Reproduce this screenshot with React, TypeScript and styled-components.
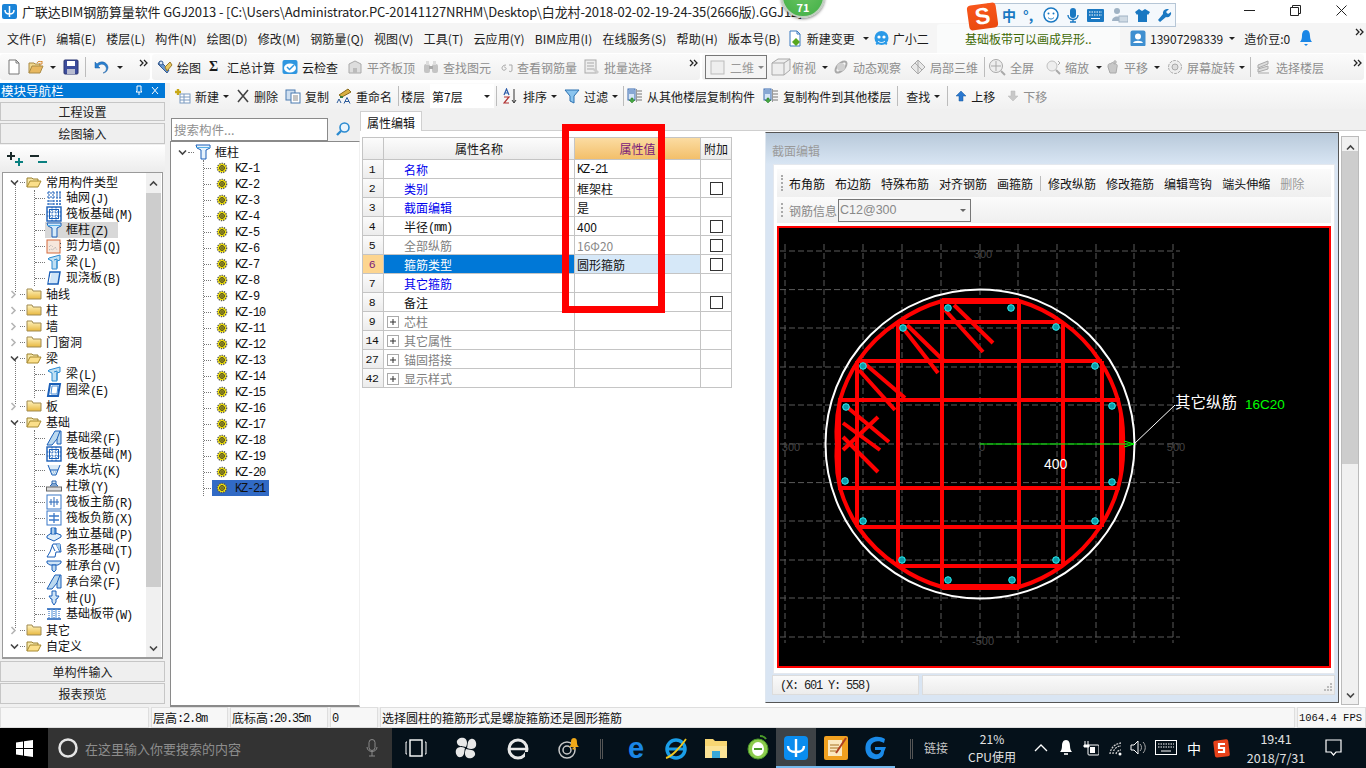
import React from 'react';
import styled, { createGlobalStyle } from 'styled-components';

const Global = createGlobalStyle`
  html, body { margin: 0; padding: 0; overflow: hidden; background: #f0f0f0; }
  * { box-sizing: border-box; }
  body { font-family: "Noto Sans CJK SC", "Liberation Sans", sans-serif; font-size: 12px; color: #111; }
  #root { width: 1366px; height: 768px; }
`;

/* ------- generic small icon helpers ------- */
const Svg: React.FC<{ w?: number; h?: number; vb?: string; children: React.ReactNode }> = ({ w = 16, h = 16, vb, children }) => (
  <svg width={w} height={h} viewBox={vb || `0 0 ${w} ${h}`} style={{ flex: 'none', display: 'block' }}>{children}</svg>
);

const Caret = styled.span<{ $c?: string }>`
  display: inline-block; flex: none; width: 0; height: 0;
  border-left: 3px solid transparent; border-right: 3px solid transparent;
  border-top: 3px solid ${p => p.$c || '#222'};
`;
const Chevrons = () => (
  <Svg w={9} h={8}><path d="M1 1l3 3-3 3M5 1l3 3-3 3" fill="none" stroke="#222" strokeWidth="1.3" /></Svg>
);

/* ------- page frame ------- */
const Page = styled.div`
  width: 1366px; height: 768px; display: flex; flex-direction: column; position: relative; overflow: hidden; background: #f0f0f0;
`;

const TitleBar = styled.div`
  height: 23px; background: #fff; display: flex; align-items: center; padding-left: 2px; gap: 5px; flex: none;
`;
const TitleText = styled.span`
  font-size: 13px; color: #222; white-space: nowrap; letter-spacing: -.12px;
`;
const WinBtns = styled.div`
  position: absolute; right: 2px; top: 0; height: 20px; display: flex;
`;
const WinBtn = styled.div`
  width: 46px; height: 20px; display: flex; align-items: center; justify-content: center;
`;

const Badge = styled.div`
  position: absolute; left: 781px; top: -26px; width: 44px; height: 44px; border-radius: 50%;
  background: radial-gradient(circle at 50% 40%, #6cc563, #3fae45); border: 2px solid #bfcfbf;
  box-shadow: 0 1px 3px rgba(0,0,0,.5); color: #fff; font-size: 11px; line-height: 12px; font-weight: 700;
  display: flex; align-items: flex-end; justify-content: center; padding-bottom: 3px;
`;

const ImeBar = styled.div`
  position: absolute; left: 987px; top: 3px; width: 189px; height: 24px; background: #f4f8fc; border: 1px solid #b6c6d6;
  display: flex; align-items: center; gap: 7px; padding-left: 14px;
`;
const ImeText = styled.span`
  color: #1a78c2; font-weight: 700; font-size: 14px; line-height: 14px;
`;
const ImeComma = styled(ImeText)`
  width: 12px; margin-right: 1px;
`;
const ImeLogo = styled.div`
  position: absolute; left: 968px; top: 4px; width: 29px; height: 25px; transform: rotate(-8deg); border-radius: 4px; z-index: 2;
  background: linear-gradient(#f8561b, #ea4a10); display: flex; align-items: center; justify-content: center;
  color: #fff; font: 700 23px/23px "Liberation Sans", sans-serif;
`;

const MenuBar = styled.div`
  height: 30px; background: #f5f5f5; display: flex; align-items: center; padding-left: 7px; flex: none; position: relative;
`;
const MenuItem = styled.span`
  margin-right: 10px; white-space: nowrap; color: #222; letter-spacing: .12px;
`;
const TipBox = styled.div`
  position: absolute; left: 937px; top: 1px; width: 183px; height: 29px; background: #fafbfb; border-radius: 3px 3px 0 0;
  color: #3f6a06; display: flex; align-items: center; padding-left: 28px;
`;
const MenuRight = styled.div`
  position: absolute; left: 1130px; top: 0; height: 30px; width: 236px; display: flex; align-items: center;
`;

const ToolRow = styled.div`
  height: 30px; flex: none; display: flex; align-items: stretch; background: #fff; padding-bottom: 3px; padding-top: 1px; position: relative;
`;
const Band = styled.div<{ $w: number; $ml?: number }>`
  width: ${p => p.$w}px; flex: none; display: flex; align-items: center; position: relative; margin-left: ${p => p.$ml ?? 0}px;
  background: linear-gradient(#fbfbfb, #f0f0f0); border-radius: 3px;
`;
const Tool = styled.span<{ $off?: boolean; $ml?: number }>`
  display: inline-flex; align-items: center; gap: 4px; white-space: nowrap; flex: none;
  margin-left: ${p => p.$ml ?? 0}px; color: ${p => (p.$off ? '#8e8e8e' : '#1a1a1a')};
`;
const VSep = styled.span<{ $ml?: number; $h?: number }>`
  width: 1px; height: ${p => p.$h ?? 20}px; background: #bcbcbc; flex: none; margin-left: ${p => p.$ml ?? 0}px;
`;
const DlgSep = styled(VSep)`
  margin: 0 -3px;
`;
const BandEnd = styled.span`
  position: absolute; right: 2px; top: 5px;
`;
const SigmaGlyph = styled.b`
  font-family: "Liberation Serif", serif; font-size: 14px; width: 10px;
`;
const ViewCombo = styled.div`
  width: 62px; height: 24px; border: 1px solid #777; margin-left: 3px; display: flex; align-items: center; gap: 4px; padding-left: 4px; color: #999; background: #f4f4f4; flex: none;
`;

const Body = styled.div`
  flex: 1; display: flex; min-height: 0; background: #f0f0f0;
`;

/* ------- left navigation ------- */
const Nav = styled.div`
  width: 165px; flex: none; display: flex; flex-direction: column; background: #f0f0f0;
`;
const NavHead = styled.div`
  height: 15px; flex: none; background: #0078d7; color: #fff; display: flex; align-items: center; justify-content: space-between;
  padding: 0 5px 0 1px; font-size: 12.5px; line-height: 15px;
`;
const NavBtn = styled.div<{ $mt?: number; $h?: number }>`
  height: ${p => p.$h ?? 21}px; flex: none; margin-top: ${p => p.$mt ?? 1}px; margin-right: 0; display: flex; align-items: center; justify-content: center;
  border: 1px solid #c6c6c6; background: #efefef; color: #222;
`;
const ExpandStrip = styled.div`
  height: 27px; flex: none; display: flex; align-items: center; gap: 6px; margin-top: 1px; padding-left: 6px; background: linear-gradient(#fff, #ececec);
`;
const NavTree = styled.div`
  height: 487px; flex: none; margin: 0 2px; border: 1px solid #9a9a9a; border-bottom-width: 2px; background: #fff; overflow: hidden; position: relative; padding-top: 1px;
`;
const ScrollTrack = styled.div`
  position: absolute; right: 1px; top: 0; bottom: 0; width: 15px; background: #f0f0f0; display: flex; flex-direction: column; align-items: center; justify-content: space-between; padding: 7px 0 5px;
`;
const ScrollThumb = styled.div<{ $top: number; $h: number }>`
  position: absolute; left: 0; right: 0; top: ${p => p.$top}px; height: ${p => p.$h}px; background: #cdcdcd;
`;
const RowT = styled.div`
  height: 16px; line-height: 16px; display: flex; align-items: center; white-space: nowrap; position: relative;
`;
const TopRow = styled(RowT)`
  padding-left: 7px;
`;
const ChevCell = styled.span`
  width: 10px; flex: none; display: flex;
`;
const DotStub = styled.span<{ $w?: number }>`
  width: ${p => p.$w ?? 5}px; flex: none; border-bottom: 1px dotted #777; height: 0; margin-right: 1px;
`;
const Children = styled.div`
  margin-left: 31px; border-left: 1px dotted #777; position: relative;
  &::before { content: ''; position: absolute; left: -20px; top: -6px; bottom: -6px; border-left: 1px dotted #777; }
`;
const ChildRow = styled(RowT)`
  gap: 0;
`;
const ChildLabel = styled.span`
  margin-left: 3px; color: #111; padding: 0 1px;
`;
const ActiveWrap = styled.span`
  display: inline-flex; align-items: center; background: #d8d8d8; height: 16px; margin-left: -1px; padding: 0 9px 0 1px;
`;
const Mono = styled.span`
  font-family: "Liberation Mono", monospace; letter-spacing: -1.2px; font-size: 12px; position: relative; top: 1px;
`;
const FpsText = styled(Mono)`
  letter-spacing: 0; font-size: 10.5px; top: 0;
`;
const fmt = (s: string) =>
  s.split(/([\x20-\x7e]+)/).map((p, i) => (/^[\x20-\x7e]+$/.test(p) ? <Mono key={i}>{p}</Mono> : p));

/* ------- main ------- */
const Main = styled.div`
  flex: 1; margin-left: 5px; display: flex; flex-direction: column; min-width: 0;
`;
const CmdBar = styled.div`
  height: 26px; flex: none; display: flex; align-items: center; padding-left: 5px; background: linear-gradient(#fbfbfb, #f1f1f1);
`;
const FloorCombo = styled.div`
  width: 64px; height: 24px; background: #fff; margin-left: 5px; display: flex; align-items: center; justify-content: space-between; padding: 0 4px 0 2px; flex: none;
`;
const Split = styled.div`
  flex: 1; display: flex; min-height: 0;
`;
const TreeCol = styled.div`
  width: 190px; flex: none; padding-top: 8px; display: flex; flex-direction: column; background: #f0f0f0;
`;
const SearchRow = styled.div`
  height: 24px; flex: none; display: flex; align-items: center; padding-left: 1px;
`;
const SearchBox = styled.div`
  width: 157px; height: 23px; border: 1px solid #8a8a8a; background: #fff; color: #909090; display: flex; align-items: center; padding-left: 2px; font-size: 12.5px;
`;
const SearchBtn = styled.div`
  width: 24px; height: 22px; margin-left: 3px; display: flex; align-items: center; justify-content: center;
`;
const KzTree = styled.div`
  flex: 1; background: #fff; border-left: 1px solid #8a8a8a; border-top: 1px solid #8a8a8a; border-bottom: 2px solid #8a8a8a; border-right: 1px solid #f0f0f0; padding-top: 2px; position: relative;
`;
const KzRoot = styled(RowT)`
  padding-left: 7px;
`;
const KzList = styled.div`
  margin-left: 32px; border-left: 1px dotted #777; margin-bottom: 8px;
`;
const KzLabel = styled.span<{ $sel?: boolean }>`
  display: inline-flex; align-items: center; gap: 7px; height: 16px; padding: 0 0 0 4px; width: 57px;
  background: ${p => (p.$sel ? '#316ac5' : 'transparent')};
`;
const EditorCol = styled.div`
  flex: 1; display: flex; flex-direction: column; min-width: 0; position: relative; background: #fff;
`;
const TabStrip = styled.div`
  height: 22px; flex: none; background: #f0f0f0; padding-top: 2px; display: flex; border-bottom: 1px solid #cfcfcf;
`;
const Tab = styled.div`
  width: 62px; height: 21px; background: #fff; border: 1px solid #d0d0d0; border-bottom: none; display: flex; align-items: center; justify-content: center; color: #111;
`;
const EditorBody = styled.div`
  flex: 1; background: #fff; padding: 6px 0 0 2px; position: relative;
`;
const Grid = styled.div`
  width: 370px; border-top: 1px solid #c4c4c4; border-left: 1px solid #c4c4c4;
`;
const GRow = styled.div<{ $h?: number }>`
  display: grid; grid-template-columns: 21px 191px 126px 31px; height: ${p => p.$h ?? 19}px;
`;
const Cell = styled.div`
  border-right: 1px solid #c4c4c4; border-bottom: 1px solid #c4c4c4; display: flex; align-items: center; overflow: hidden; white-space: nowrap;
`;
const IdxCell = styled(Cell)<{ $sel?: boolean }>`
  background: ${p => (p.$sel ? '#fdd58f' : 'linear-gradient(#fbfbfb,#ececec)')}; color: ${p => (p.$sel ? '#7a1a7a' : '#111')};
  justify-content: center; font-family: "Liberation Mono", monospace; font-size: 11.5px; padding-right: 2px; letter-spacing: -.5px;
`;
const HeadCell = styled(Cell)<{ $hot?: boolean }>`
  justify-content: center; background: ${p => (p.$hot ? 'linear-gradient(#fbdca2,#f3bf6a)' : 'linear-gradient(#fcfcfc,#ebebeb)')};
  color: ${p => (p.$hot ? '#7a1a7a' : '#111')};
`;
const NameCell = styled(Cell)<{ $sel?: boolean; $c?: string }>`
  padding: 1px 0 0 20px; background: ${p => (p.$sel ? '#0078d7' : '#fff')}; color: ${p => (p.$sel ? '#fff' : p.$c || '#111')};
`;
const GroupCell = styled(Cell)`
  padding: 1px 0 0 3px; color: #808080; gap: 5px;
`;
const ValueCell = styled(Cell)<{ $sel?: boolean; $off?: boolean }>`
  padding-left: 2px; background: ${p => (p.$sel ? '#d6e8f8' : '#fff')}; color: ${p => (p.$off ? '#888' : '#111')};
`;
const AddCell = styled(Cell)`
  justify-content: center;
`;
const Check = styled.span`
  width: 13px; height: 13px; border: 1px solid #333; background: #fff; display: block;
`;
const PlusBox = styled.span`
  width: 12px; height: 12px; border: 1px solid #aaa; position: relative; flex: none; background: #fff;
  &::before { content: ''; position: absolute; left: 2px; right: 2px; top: 4px; height: 2px; background: #333; transform: scaleY(.5); }
  &::after { content: ''; position: absolute; top: 2px; bottom: 2px; left: 4px; width: 2px; background: #333; transform: scaleX(.5); }
`;
const RedMark = styled.div`
  position: absolute; left: 562px; top: 124px; width: 103px; height: 189px; border: 7px solid #ff0000; pointer-events: none;
`;

/* ------- section dialog ------- */
const Dialog = styled.div`
  position: absolute; left: 765px; top: 132px; width: 574px; height: 571px; border: 1px solid #555; border-left-color: #dfe7f0;
  background: #d9e5f3; display: flex; flex-direction: column;
`;
const DlgTitle = styled.div`
  height: 31px; flex: none; background: linear-gradient(#b8c9da, #d8e5f3); color: #9a9a9a; padding: 10px 0 0 6px; line-height: 16px;
`;
const DlgInner = styled.div`
  height: 510px; margin: 0 3px 0 7px; flex: none; background: #fff; border: 1px solid #e4e8ee; padding: 4px 3px 0 3px; display: flex; flex-direction: column;
`;
const DlgBar = styled.div<{ $h: number }>`
  height: ${p => p.$h}px; flex: none; display: flex; align-items: center; gap: 10px; padding-left: 12px; background: linear-gradient(#fbfbfb, #efefef);
  position: relative;
  &::before { content: ''; position: absolute; left: 4px; top: 6px; bottom: 6px; border-left: 2px dotted #aaa; }
`;
const DlgOff = styled.span`
  color: #999;
`;
const DlgLabel = styled.span`
  color: #888;
`;
const RebarCombo = styled.div`
  width: 133px; height: 23px; margin-left: -9px; border: 1px solid #777; background: #f4f4f4; color: #888; display: flex; align-items: center; justify-content: space-between; padding: 0 4px 0 1px; font-family: "Liberation Sans", sans-serif; font-size: 12.5px;
`;
const CanvasBox = styled.div`
  margin-top: 3px; height: 442px; flex: none; border: 2px solid #ff0000; background: #000; overflow: hidden;
`;
const DlgStatus = styled.div`
  height: 20px; flex: none; display: flex; gap: 3px; margin: 1px 3px 0 6px;
`;
const DlgCell = styled.div<{ $grow?: boolean }>`
  width: ${p => (p.$grow ? 'auto' : '147px')}; flex: ${p => (p.$grow ? 1 : 'none')}; background: linear-gradient(#fafafa,#ececec); border: 1px solid #dcdcdc; display: flex; align-items: center; padding-left: 7px; color: #222;
  position: relative;
`;
const Grip = styled.span`
  position: absolute; right: 1px; bottom: 1px;
`;
const SideScroll = styled.div`
  position: absolute; left: 1341px; top: 136px; width: 18px; height: 569px; border: 1px solid #bbb; background: #f0f0f0; display: flex; flex-direction: column; align-items: center; justify-content: space-between; padding: 7px 0 5px;
`;

/* ------- status + taskbar ------- */
const Status = styled.div`
  height: 21px; flex: none; display: flex; gap: 2px; background: #f0f0f0; padding-left: 0;
`;
const StatusCell = styled.div<{ $w?: number }>`
  width: ${p => (p.$w ? `${p.$w}px` : 'auto')}; flex: ${p => (p.$w ? 'none' : 1)}; border: 1px solid #dedede; background: #f7f7f7; display: flex; align-items: center; padding-left: 1px; color: #111; white-space: nowrap; overflow: hidden;
`;
const Taskbar = styled.div`
  height: 40px; flex: none; background: #05111a; display: flex; align-items: stretch; color: #fff; position: relative;
`;
const StartBtn = styled.div`
  width: 48px; flex: none; background: #000; display: flex; align-items: center; justify-content: center;
`;
const SearchTask = styled.div`
  width: 344px; flex: none; background: #333; display: flex; align-items: center; padding-left: 9px; gap: 6px; color: #8d8d8d; position: relative; font-size: 13px;
`;
const TaskIcon = styled.div<{ $l: number; $active?: boolean; $run?: boolean }>`
  position: absolute; left: ${p => p.$l}px; top: 0; bottom: 0; width: 40px; display: flex; align-items: center; justify-content: center;
  background: ${p => (p.$active ? '#3d4246' : 'transparent')};
  &::after { content: ''; display: ${p => (p.$run ? 'block' : 'none')}; position: absolute; left: 0; right: 0; bottom: 0; height: 2px; background: #76b9ed; }
`;
const EdgeGlyph = styled.span`
  color: #1a86e6; font-family: "Liberation Sans", sans-serif; font-weight: 700; font-size: 29px; line-height: 30px;
`;
const TrayText = styled.div<{ $l: number; $w: number; $fs?: number; $lh?: number; $c?: string }>`
  position: absolute; left: ${p => p.$l}px; width: ${p => p.$w}px; top: 0; bottom: 0; display: flex; flex-direction: column; justify-content: center; align-items: center;
  color: ${p => p.$c || '#e2e2e2'}; line-height: ${p => p.$lh ?? 18}px; font-size: ${p => p.$fs ?? 12}px;
`;
const TrayIcon = styled.div<{ $l: number }>`
  position: absolute; left: ${p => p.$l}px; top: 11px; display: flex;
`;
const TaskSep = styled.div<{ $l: number }>`
  position: absolute; left: ${p => p.$l}px; top: 11px; height: 20px; width: 3px; border-left: 1px solid #555; border-right: 1px solid #555;
`;

/* ------- tree icons ------- */
const FolderOpen = () => (
  <Svg><path d="M1 13V4h5l1 1h5v2" fill="#f7e8a8" stroke="#9a8030" /><path d="M1 13l3-6h11l-3 6z" fill="#fbdf8a" stroke="#a88a30" /></Svg>
);
const FolderClosed = () => (
  <Svg>
    <defs><linearGradient id="fc" x1="0" y1="0" x2="0" y2="1"><stop offset="0" stopColor="#fff4c0" /><stop offset="1" stopColor="#e8b840" /></linearGradient></defs>
    <path d="M1 13V3h5l1 2h8v8z" fill="url(#fc)" stroke="#a08a50" />
  </Svg>
);
const B = '#1b5fb8';
const IGrid = () => (
  <Svg><path d="M1 3h14M1 7h14M1 11h14M1 14h14M3 1v14M7 1v14M11 1v14M14 1v14" stroke={B} strokeDasharray="2 1" fill="none" /></Svg>
);
const IRaft = () => (
  <Svg><rect x="1" y="1" width="14" height="14" fill="none" stroke={B} strokeWidth="1.4" /><rect x="3.500" y="3.500" width="9" height="9" fill="none" stroke={B} /><path d="M6 1v14M10 1v14M1 6h14M1 10h14" stroke={B} strokeDasharray="1.500 1" /></Svg>
);
const IColumn = ({ dk = false }: { dk?: boolean }) => (
  <Svg><path d="M1 1h14v3l-4 2v9H6V6L2 4z" fill={dk ? '#e6f2fc' : '#d6eaf9'} stroke={B} /><path d="M1 3.5h14" stroke="#58b0e8" /></Svg>
);
const IWall = () => (
  <Svg><rect x="1" y="2" width="13" height="13" fill="#f6e7dc" stroke="#d46a3c" /><path d="M3 12l2-1 2 1 2-3 2 3M3 9l2-2 2 2" stroke="#aaa" fill="none" strokeDasharray="1 1" /><path d="M14.5 5v1M14.5 9v1" stroke="#444" /></Svg>
);
const IBeam = () => (
  <Svg><path d="M3 4l11-3v5l-3 1v8H6V7L2 5z" fill="#bfe0f4" stroke="#2c8ad0" /><path d="M8 6l3-1v9" fill="none" stroke="#2c8ad0" /></Svg>
);
const ISlab = () => (
  <Svg><path d="M4 2h10l-2 12H2z" fill="#cfe4f8" stroke={B} strokeWidth="1.5" /><path d="M3 13l2-10" stroke="#fff" /></Svg>
);
const IRing = () => (
  <Svg><path d="M4 2h10l-2 12H2z" fill="#fff" stroke={B} strokeWidth="2" /><path d="M6 4h6l-1 8H5z" fill="#fff" stroke="#4a8ed8" /></Svg>
);
const IFootBeam = () => (
  <Svg><path d="M1 15l5-9 3-5h6v13h-4V9L6 15z" fill="#bcd9ef" stroke={B} /><path d="M11 9l3-8" stroke={B} /></Svg>
);
const IPit = () => (
  <Svg><path d="M2 3l2 5h8l2-5M4 8l2 5h4l2-5" fill="#dcebf6" stroke={B} /><path d="M5 10h6M6 12h4" stroke="#78aad8" strokeDasharray="1 1" /></Svg>
);
const IPier = () => (
  <Svg><path d="M6 3h4v3H6z" fill="#d6e6f2" stroke="#2a66b0" /><path d="M4 8l2-2h4l2 2z" fill="#d6e6f2" stroke="#2a66b0" /><rect x="0.5" y="9" width="15" height="4" fill="#ddd" stroke="#666" /></Svg>
);
const IRaftBar = ({ neg = false }: { neg?: boolean }) => (
  <Svg><rect x="1" y="1" width="14" height="14" fill="#fff" stroke="#3a78c8" />{neg ? <path d="M3 6h10M3 10h10M8 3v10" stroke="#3a78c8" strokeWidth="1.3" /> : <path d="M3 8h10M8 3v10M5 5v6M11 5v6" stroke="#2a68b8" fill="none" />}</Svg>
);
const IIso = () => (
  <Svg><path d="M1 10l6-4 8 3v2l-7 4-7-3z" fill="#e0eef9" stroke={B} /><path d="M5 2h5v6H5z" fill="#5a9ad8" stroke={B} /><path d="M7 2v6" stroke="#fff" /></Svg>
);
const IStrip = () => (
  <Svg><path d="M1 15l3-5 3-8h7l1 8h-5l-1 5z" fill="#fff" stroke={B} /><path d="M6 3l3 6M10 2l4 8" stroke={B} /><path d="M9 3l5-1v7l-4-6z" fill="#a6cdec" /></Svg>
);
const ICap = () => (
  <Svg><path d="M1 3h14v2l-3 2H4L1 5z" fill="#cfe4f6" stroke={B} /><path d="M6 7h4v5l-2 2-2-2z" fill="#bcd8f0" stroke={B} /></Svg>
);
const IPile = () => (
  <Svg><path d="M6 1h4v5h3l-2 3h-1v3l-2 3-2-3V9H5L3 6h3z" fill="#cfe4f6" stroke={B} /></Svg>
);
const IBand = () => (
  <Svg><path d="M1 3h14M1 13h14" stroke={B} strokeWidth="1.4" /><path d="M3 3v10M8 3v10M13 3v10" stroke={B} strokeDasharray="1 1" /><path d="M6 3v10M10 3v10" stroke="#4a8ed8" /></Svg>
);
const IGear = () => (
  <Svg w={12} h={12}>
    <circle cx="6" cy="6" r="4.6" fill="#ffee00" stroke="#555" strokeWidth="1.4" strokeDasharray="1.3 1" />
    <circle cx="6" cy="6" r="2.4" fill="#ffee00" stroke="#333" />
    <path d="M6 3.5v5M3.5 6h5" stroke="#333" strokeWidth=".8" />
  </Svg>
);
const ChevDown = ({ c = '#444' }: { c?: string }) => (
  <Svg w={9} h={7}><path d="M1 1.5l3.5 3.5L8 1.5" fill="none" stroke={c} strokeWidth="1.6" /></Svg>
);
const ChevRight = () => (
  <Svg w={7} h={9}><path d="M1.5 1L5 4.5 1.5 8" fill="none" stroke="#b5b5b5" strokeWidth="1.6" /></Svg>
);
const ChevUp = () => (
  <Svg w={9} h={7}><path d="M1 5.5L4.5 2 8 5.5" fill="none" stroke="#444" strokeWidth="1.6" /></Svg>
);

/* ------- toolbar icons ------- */
const G = '#a9a9a9';
const INew = () => <Svg><path d="M3 1h7l3 3v11H3z" fill="#fff" stroke="#777" /><path d="M10 1v3h3" fill="none" stroke="#777" /></Svg>;
const IOpen = () => <Svg><path d="M1 14V4h5l1 1h5v2" fill="#f0d890" stroke="#aa8a44" /><path d="M1 14l3-7h11l-3 7z" fill="#e8b860" stroke="#aa8a44" /><path d="M9 4c1-2 3-2 4-1l1-1v3h-3" fill="none" stroke="#d88a30" /></Svg>;
const ISave = () => <Svg><rect x="1" y="1" width="14" height="14" rx="1" fill="#3c4c9c" stroke="#2a3470" /><rect x="4" y="2" width="8" height="5" fill="#fff" /><rect x="4" y="10" width="8" height="5" fill="#b8bcd0" /></Svg>;
const IUndo = () => <Svg><path d="M9 14c3-1 4-4 3-6-1-3-5-4-8-1l2 2H1V3l2 2c4-4 10-2 11 3 0 3-2 6-5 6z" fill="#2a80d0" stroke="#1a5ca0" strokeWidth=".5" /></Svg>;
const IDraw = () => <Svg><path d="M3 2l9 9-2 3-9-9z" fill="#6a98d0" stroke="#345a90" /><path d="M8 8l5-5 2 3-5 6z" fill="#e8c860" stroke="#987828" /><circle cx="4" cy="4" r="2" fill="#d8e8f8" stroke="#345a90" /></Svg>;
const ICloud = () => <Svg><rect x="0.5" y="1" width="15" height="14" rx="2" fill="#2e96e0" /><ellipse cx="8" cy="9" rx="6" ry="4.5" fill="#fff" /><path d="M5 8l2.5 2.5L12 6" fill="none" stroke="#2e96e0" strokeWidth="1.5" /></Svg>;
const IGrayBox = () => <Svg><path d="M2 5l6-3 6 3v9H2z" fill="#ddd" stroke={G} /><path d="M6 9h4v5H6z" fill="#bbb" /></Svg>;
const IBinoc = () => <Svg><rect x="1" y="5" width="6" height="9" rx="2" fill="#c4c4c4" /><rect x="9" y="5" width="6" height="9" rx="2" fill="#c4c4c4" /><rect x="3" y="2" width="3" height="4" fill="#ddd" /><rect x="10" y="2" width="3" height="4" fill="#ddd" /><rect x="6" y="7" width="4" height="3" fill="#aaa" /></Svg>;
const ISmall64 = () => <Svg w={12} h={16}><path d="M5 6c-3 0-4 2-4 3s1 3 3 2c2-1 1-3-1-3M8 6h3v5c0 2-2 2-3 1" fill="none" stroke={G} /></Svg>;
const IBatch = () => <Svg><rect x="1" y="1" width="11" height="13" fill="#eee" stroke={G} /><path d="M3 4h7M3 7h7M3 10h7" stroke={G} /><path d="M11 9l4 4-2 2-4-4z" fill="#ccc" /></Svg>;
const IPlane = () => <Svg><rect x="1" y="2" width="13" height="13" fill="#eee" stroke="#bbb" /></Svg>;
const ICube = () => <Svg w={22} h={18}><path d="M2 5l6-4h12v11l-6 5H2z" fill="#eee" stroke={G} /><path d="M2 5h12v12M14 5l6-4" fill="none" stroke={G} /></Svg>;
const IOrbit = () => <Svg><ellipse cx="8" cy="8" rx="7" ry="3.5" transform="rotate(-45 8 8)" fill="none" stroke={G} strokeWidth="2" /><circle cx="8" cy="8" r="4" fill="#cfcfcf" /></Svg>;
const ILocal3d = () => <Svg><path d="M8 1l7 7-7 7-7-7z" fill="#e8e8e8" stroke={G} /><path d="M5 4l7 7M8 1v14" stroke={G} /></Svg>;
const IFull = () => <Svg w={18} h={18}><circle cx="8" cy="8" r="6.5" fill="#eee" stroke={G} /><path d="M8 3v10M3 8h10" stroke={G} /><path d="M13 13l4 4" stroke={G} strokeWidth="2" /></Svg>;
const IZoom = () => <Svg><circle cx="7" cy="7" r="5" fill="#eee" stroke="#c0c0c0" /><path d="M11 11l4 4" stroke={G} strokeWidth="2" /><path d="M13 2l2 2-2 2" fill="none" stroke={G} /></Svg>;
const IPan = () => <Svg><path d="M4 8c0-3 1-4 3-3 0-2 3-2 3 0 2-1 4 1 3 3l-1 6H6z" fill="#c8c8c8" stroke={G} /><path d="M11 1v4M9 3h4" stroke={G} /></Svg>;
const IRotate = () => <Svg><circle cx="8" cy="8" r="6.5" fill="#eee" stroke={G} strokeDasharray="3 1" /><circle cx="8" cy="8" r="3" fill="#ddd" stroke={G} /></Svg>;
const ILevel = () => <Svg><path d="M2 6l10-4v3L2 9zM2 10l10-3v3L2 13zM2 14h11" fill="#ddd" stroke={G} /></Svg>;
const IAddNew = () => <Svg><rect x="5" y="6" width="10" height="9" fill="#fff" stroke="#7a9ac0" /><path d="M5 9h10M5 12h10M9 6v9" stroke="#7a9ac0" /><path d="M3 1v6M0 4h6" stroke="#c8a818" strokeWidth="2.4" /></Svg>;
const ICross = () => <Svg w={14} h={14}><path d="M2 1l10 12M12 1L2 13" stroke="#444" strokeWidth="1.6" /></Svg>;
const ICopy = () => <Svg><rect x="1" y="2" width="9" height="10" fill="#cfdff0" stroke="#4a7ab0" /><rect x="6" y="5" width="9" height="10" fill="#fff" stroke="#4a7ab0" /><path d="M8 8h5M8 10h5M8 12h5" stroke="#888" /></Svg>;
const IRename = () => <Svg><path d="M3 7l9-6 3 3-9 5z" fill="#d8b040" stroke="#886818" /><rect x="4" y="8" width="3" height="2" fill="#3a7a3a" /><path d="M1 15l2-4 2 4M8 15.500l3-6 3 6M9 13.500h4" fill="none" stroke="#2a5a9a" /></Svg>;
const ISort = () => <Svg><path d="M1 7l2.500-6L6 7M2 5h3" fill="none" stroke="#2a5aa8" strokeWidth="1.200" /><path d="M1 9h5L1 15h5" fill="none" stroke="#b03030" strokeWidth="1.200" /><path d="M11 1v13M9 12l2 3 2-3" fill="none" stroke="#333" /></Svg>;
const IFilter = () => <Svg><path d="M1 2h14l-5 6v7l-4-2V8z" fill="#8ac4ee" stroke="#2a70b0" /></Svg>;
const ICopyFloor = () => <Svg>
  <rect x="1" y="1" width="7" height="11" fill="#d4e4f6" stroke="#3a6ab0" /><path d="M2 3h5M2 5h5" stroke="#3a6ab0" />
  <path d="M10 3h5M10 6h5M10 9h5M10 12h5" stroke="#777" /><rect x="9" y="1" width="1" height="13" fill="#999" />
  <path d="M4 10v2H2l3 3 3-3H6v-2z" fill="#46a842" stroke="#2a7a2a" strokeWidth=".5" />
</Svg>;
const IUp = () => <Svg w={12} h={12}><path d="M6 1l5 5H8v5H4V6H1z" fill="#2a78d0" stroke="#1a5a9c" strokeWidth=".5" /></Svg>;
const IDown = () => <Svg w={12} h={12}><path d="M6 11l5-5H8V1H4v5H1z" fill="#c8c8c8" stroke="#bbb" strokeWidth=".5" /></Svg>;
const IDoc = () => <Svg w={15} h={17}><path d="M2 1h7l3 3v12H2z" fill="#fff" stroke="#3a7ac0" /><path d="M9 1v3h3" fill="none" stroke="#3a7ac0" /><path d="M8 8l4 4-4 4-4-4z" fill="#58a820" /></Svg>;
const IXiaoer = () => <Svg w={17} h={17}><ellipse cx="8.5" cy="8" rx="7" ry="7" fill="#2a9ae8" /><circle cx="6" cy="7" r="1.6" fill="#fff" /><circle cx="11" cy="7" r="1.6" fill="#fff" /><path d="M5 11c2 2 5 2 7 0" stroke="#fff" fill="none" /><path d="M3 14l2-1M14 14l-2-1" stroke="#2a9ae8" strokeWidth="2" /></Svg>;
const IUser = () => <Svg><rect x="0.5" y="0.5" width="15" height="16" rx="2" fill="#3f8fd0" /><circle cx="8" cy="6.5" r="3" fill="#fff" /><path d="M3 13c1-3 9-3 10 0z" fill="#fff" /></Svg>;
const IBell = ({ c = '#1a86e6' }: { c?: string }) => <Svg w={14} h={18}><path d="M7 1c3 0 4 3 4 6 0 3 1 5 2 6H1c1-1 2-3 2-6 0-3 1-6 4-6z" fill={c} /><path d="M5 15h4l-2 2z" fill={c} /></Svg>;

/* ------- section drawing ------- */
const xsV = [785, 824, 863, 902, 941, 980, 1018, 1057, 1096, 1134, 1173];
const ysH = [251, 289.6, 328, 367, 405, 444, 482.6, 521, 560, 598, 637];
const dots: [number, number][] = [[948,308],[1011,308],[903,328],[1056,327],[863,366],[1095,366],[846,407],[1112,406],[845,481],[1112,482],[863,521],[1095,521],[902,560],[1056,560],[948,580],[1012,580]];
const hLines: [number, number, number][] = [[322,900,1062],[361,858,1102],[400,838,1120],[488,838,1120],[527,858,1102],[566,898,1062]];
const vLines: [number, number, number][] = [[857,361,527],[898,322,566],[942,301,587],[1019,301,587],[1063,322,566],[1102,361,527]];
const diags: [number, number, number, number][] = [
  [945,310,983,352],[954,305,993,343],[903,328,938,373],[907,325,945,362],[859,370,895,410],[864,363,905,398],
  [847,407,889,442],[843,423,880,450],[843,437,878,472],[878,417,843,450],
];
const ringPts: [number, number][] = [[942,301],[1019,301],[1062,322],[1100,361],[1118,400],[1123,444],[1118,488],[1100,527],[1062,566],[1019,587],[942,587],[898,566],[858,527],[840,488],[837,444],[840,400],[858,361],[898,322]];
const ringPath = `M${ringPts[0].join(' ')} L${ringPts[1].join(' ')} ` +
  ringPts.slice(2).map((p, i) => ((i + 2) === 10 ? `L${p.join(' ')}` : `A143 143 0 0 1 ${p.join(' ')}`)).join(' ') +
  ` A143 143 0 0 1 ${ringPts[0].join(' ')}Z`;

const Section = () => (
  <svg width="550" height="438" viewBox="779 228 550 438" style={{ display: 'block' }}>
    {xsV.map(x => <line key={x} x1={x} x2={x} y1={244} y2={643} stroke="#5a5a5a" strokeDasharray="6 3" />)}
    {ysH.map(y => <line key={y} y1={y} y2={y} x1={780} x2={1180} stroke="#5a5a5a" strokeDasharray="6 3" />)}
    <g fill="#444" fontFamily="Liberation Sans" fontSize="11" textAnchor="middle">
      <text x="983" y="258">300</text>
      <text x="983" y="645">-500</text>
      <text x="791" y="451">300</text>
      <text x="982" y="451">0</text>
      <text x="1176" y="451">500</text>
    </g>
    <circle cx="980" cy="444" r="154.5" fill="none" stroke="#fff" strokeWidth="2" />
    <path d={ringPath} fill="none" stroke="#ff0000" strokeWidth="4" strokeLinejoin="round" />
    <path d="M942 301h77M942 587h77" stroke="#ff0000" strokeWidth="6" />
    <path d="M1119 405A146 146 0 0 1 1119 483zM841 405A146 146 0 0 0 841 483z" fill="#ff0000" />
    {hLines.map(([y, a, b]) => <line key={y} x1={a} x2={b} y1={y} y2={y} stroke="#ff0000" strokeWidth="4" />)}
    {vLines.map(([x, a, b]) => <line key={x} x1={x} x2={x} y1={a} y2={b} stroke="#ff0000" strokeWidth="4" />)}
    {diags.map((d, i) => <line key={i} x1={d[0]} y1={d[1]} x2={d[2]} y2={d[3]} stroke="#ff0000" strokeWidth="4" />)}
    {dots.map(([x, y], i) => (
      <circle key={i} cx={x} cy={y} r="3.3" fill="#0a9aa8" stroke="#2cf0f4" strokeWidth="1" />
    ))}
    <line x1="980" y1="444" x2="1134" y2="444" stroke="#00ff00" />
    <path d="M1124 441l10 3-10 3" fill="none" stroke="#00ff00" />
    <line x1="1134" y1="444" x2="1175" y2="405" stroke="#fff" />
    <text x="1175" y="408" fill="#fff" fontSize="15.5" fontFamily="Noto Sans CJK SC">其它纵筋</text>
    <text x="1245" y="409" fill="#00ff00" fontSize="13.5" fontFamily="Liberation Sans">16C20</text>
    <text x="1044" y="469" fill="#fff" fontSize="14" fontFamily="Liberation Sans">400</text>
  </svg>
);

/* ------- data ------- */
type Node = { label: string; icon: React.ReactNode; active?: boolean };
const common: Node[] = [
  { label: '轴网(J)', icon: <IGrid /> }, { label: '筏板基础(M)', icon: <IRaft /> },
  { label: '框柱(Z)', icon: <IColumn />, active: true }, { label: '剪力墙(Q)', icon: <IWall /> },
  { label: '梁(L)', icon: <IBeam /> }, { label: '现浇板(B)', icon: <ISlab /> },
];
const beams: Node[] = [{ label: '梁(L)', icon: <IBeam /> }, { label: '圈梁(E)', icon: <IRing /> }];
const found: Node[] = [
  { label: '基础梁(F)', icon: <IFootBeam /> }, { label: '筏板基础(M)', icon: <IRaft /> }, { label: '集水坑(K)', icon: <IPit /> },
  { label: '柱墩(Y)', icon: <IPier /> }, { label: '筏板主筋(R)', icon: <IRaftBar /> }, { label: '筏板负筋(X)', icon: <IRaftBar neg /> },
  { label: '独立基础(P)', icon: <IIso /> }, { label: '条形基础(T)', icon: <IStrip /> }, { label: '桩承台(V)', icon: <ICap /> },
  { label: '承台梁(F)', icon: <IFootBeam /> }, { label: '桩(U)', icon: <IPile /> }, { label: '基础板带(W)', icon: <IBand /> },
];

const Top: React.FC<{ label: string; open?: boolean }> = ({ label, open }) => (
  <TopRow>
    <ChevCell>{open ? <ChevDown /> : <ChevRight />}</ChevCell>
    <DotStub />
    {open ? <FolderOpen /> : <FolderClosed />}
    <ChildLabel>{label}</ChildLabel>
  </TopRow>
);
const Kids: React.FC<{ items: Node[] }> = ({ items }) => (
  <Children>
    {items.map(n => (
      <ChildRow key={n.label + n.active}>
        <DotStub $w={10} />
        {n.active ? (
          <ActiveWrap>{n.icon}<ChildLabel>{fmt(n.label)}</ChildLabel></ActiveWrap>
        ) : (
          <>{n.icon}<ChildLabel>{fmt(n.label)}</ChildLabel></>
        )}
      </ChildRow>
    ))}
  </Children>
);

const kz = Array.from({ length: 21 }, (_, i) => `KZ-${i + 1}`);

type PRow = { n: string; name: string; c?: string; val?: React.ReactNode; off?: boolean; check?: boolean; sel?: boolean };
const props: PRow[] = [
  { n: '1', name: '名称', c: '#0000ee', val: fmt('KZ-21') },
  { n: '2', name: '类别', c: '#0000ee', val: '框架柱', check: true },
  { n: '3', name: '截面编辑', c: '#0000ee', val: '是' },
  { n: '4', name: '半径(mm)', val: '400', check: true },
  { n: '5', name: '全部纵筋', c: '#808080', val: '16Φ20', off: true, check: true },
  { n: '6', name: '箍筋类型', val: '圆形箍筋', check: true, sel: true },
  { n: '7', name: '其它箍筋', c: '#0000ee' },
  { n: '8', name: '备注', check: true },
];
const groups = [['9', '芯柱'], ['14', '其它属性'], ['27', '锚固搭接'], ['42', '显示样式']];

export default function App() {
  return (
    <Page>
      <Global />
      <TitleBar>
        <Svg w={15} h={15}><rect width="15" height="15" rx="2" fill="#1b84d8" /><path d="M7.5 2v11M3 6c0 3 2 4 4.5 4s4.500-1 4.500-4" stroke="#fff" strokeWidth="1.5" fill="none" /></Svg>
        <TitleText>广联达BIM钢筋算量软件 GGJ2013 - [C:\Users\Administrator.PC-20141127NRHM\Desktop\白龙村-2018-02-02-19-24-35(2666版).GGJ12]</TitleText>
      </TitleBar>
      <Badge>71</Badge>
      <WinBtns>
        <WinBtn><Svg w={11} h={11}><path d="M0 5.5h11" stroke="#222" /></Svg></WinBtn>
        <WinBtn><Svg w={11} h={11}><path d="M.5 2.500h8v8h-8zM2.500 2.500v-2h8v8h-2" fill="none" stroke="#222" /></Svg></WinBtn>
        <WinBtn><Svg w={11} h={11}><path d="M.5.5l10 10M10.500.5l-10 10" stroke="#222" /></Svg></WinBtn>
      </WinBtns>

      <MenuBar>
        {['文件(F)', '编辑(E)', '楼层(L)', '构件(N)', '绘图(D)', '修改(M)', '钢筋量(Q)', '视图(V)', '工具(T)', '云应用(Y)', 'BIM应用(I)', '在线服务(S)', '帮助(H)', '版本号(B)'].map(m => (
          <MenuItem key={m}>{m}</MenuItem>
        ))}
        <Tool $ml={-3}><IDoc /></Tool>
        <Tool $ml={4}>新建变更</Tool>
        <Tool $ml={8}><Caret /></Tool>
        <Tool $ml={4}><IXiaoer /></Tool>
        <Tool $ml={3}>广小二</Tool>
        <TipBox>基础板带可以画成异形..</TipBox>
        <MenuRight>
          <IUser />
          <Tool $ml={4}>13907298339</Tool>
          <Tool $ml={6}><Caret /></Tool>
          <Tool $ml={9}>造价豆:0</Tool>
          <Tool $ml={9}><IBell /></Tool>
          <BandEnd><Chevrons /></BandEnd>
        </MenuRight>
      </MenuBar>

      <ImeLogo>S</ImeLogo>
      <ImeBar>
        <ImeText>中</ImeText>
        <ImeComma>°,</ImeComma>
        <Svg w={16} h={16}><circle cx="8" cy="8" r="7" fill="#fff" stroke="#1a78c2" strokeWidth="1.5" /><circle cx="5.500" cy="6.500" r="1" fill="#1a78c2" /><circle cx="10.500" cy="6.500" r="1" fill="#1a78c2" /><path d="M5 10.500c2 2 4 2 6 0" fill="none" stroke="#1a78c2" /></Svg>
        <Svg w={14} h={16}><rect x="4" y="1" width="6" height="10" rx="3" fill="#1a78c2" /><path d="M2 8c0 6 10 6 10 0M7 12v3M4 15h6" fill="none" stroke="#1a78c2" strokeWidth="1.4" /></Svg>
        <Svg w={17} h={13}><rect width="17" height="13" rx="1" fill="#1a78c2" /><path d="M2 3h13M2 6h13" stroke="#fff" strokeDasharray="1.5 1" /><path d="M4 9.500h9" stroke="#fff" /></Svg>
        <Svg w={17} h={16}><circle cx="6" cy="4" r="3" fill="#9fb2c4" /><path d="M1 14c0-6 10-6 10 0z" fill="#9fb2c4" /><rect x="8" y="9" width="9" height="6" fill="#cfdae4" stroke="#9fb2c4" /></Svg>
        <Svg w={15} h={15}><path d="M4 1l3 2 3-2 5 3-2 3-1-1v8H3V6L2 7 0 4z" fill="#1a78c2" /></Svg>
        <Svg w={15} h={15}><path d="M10 1a4 4 0 0 0-4 5l-5 6 2 2 6-5a4 4 0 0 0 5-5l-3 2-2-2 3-3z" fill="#1a78c2" /></Svg>
      </ImeBar>

      <ToolRow>
        <Band $w={150}>
          <Tool $ml={6}><INew /></Tool>
          <Tool $ml={6}><IOpen /></Tool>
          <Tool $ml={6}><Caret /></Tool>
          <Tool $ml={7}><ISave /></Tool>
          <VSep $ml={6} />
          <Tool $ml={8}><IUndo /></Tool>
          <Tool $ml={7}><Caret /></Tool>
          <BandEnd><Chevrons /></BandEnd>
        </Band>
        <Band $w={548} $ml={2}>
          <Tool $ml={5}><IDraw />绘图</Tool>
          <Tool $ml={8}><SigmaGlyph>Σ</SigmaGlyph></Tool>
          <Tool $ml={8}>汇总计算</Tool>
          <Tool $ml={7}><ICloud />云检查</Tool>
          <Tool $ml={9} $off><IGrayBox />平齐板顶</Tool>
          <Tool $ml={8} $off><IBinoc />查找图元</Tool>
          <Tool $ml={10} $off><ISmall64 />查看钢筋量</Tool>
          <Tool $ml={7} $off><IBatch />批量选择</Tool>
          <BandEnd><Chevrons /></BandEnd>
        </Band>
        <Band $w={662} $ml={2}>
          <ViewCombo><IPlane /><span>二维</span><Caret $c="#888" /></ViewCombo>
          <Tool $ml={3}><ICube /></Tool>
          <Tool $ml={0} $off>俯视</Tool>
          <Tool $ml={6}><Caret /></Tool>
          <Tool $ml={5} $off><IOrbit />动态观察</Tool>
          <Tool $ml={9} $off><ILocal3d />局部三维</Tool>
          <VSep $ml={6} />
          <Tool $ml={3} $off><IFull />全屏</Tool>
          <Tool $ml={11} $off><IZoom />缩放</Tool>
          <Tool $ml={7}><Caret /></Tool>
          <Tool $ml={2} $off><IPan />平移</Tool>
          <Tool $ml={6}><Caret /></Tool>
          <Tool $ml={7} $off><IRotate />屏幕旋转</Tool>
          <Tool $ml={4}><Caret /></Tool>
          <VSep $ml={5} />
          <Tool $ml={5} $off><ILevel />选择楼层</Tool>
          <BandEnd><Chevrons /></BandEnd>
        </Band>
      </ToolRow>

      <Body>
        <Nav>
          <NavHead>
            <span>模块导航栏</span>
            <Svg w={28} h={11}><path d="M5 1h4v5l1 1H4l1-1zM7 7v3" fill="none" stroke="#fff" /><path d="M20 2l6 7M26 2l-6 7" stroke="#fff" /></Svg>
          </NavHead>
          <NavBtn $mt={4} $h={19}>工程设置</NavBtn>
          <NavBtn $mt={2} $h={21}>绘图输入</NavBtn>
          <ExpandStrip>
            <Svg w={18} h={18}><path d="M5 2v8M1 6h8" stroke="#1a2a2a" strokeWidth="2" /><path d="M13 8v8M9 12h8" stroke="#0a8080" strokeWidth="2" /></Svg>
            <Svg w={18} h={18}><path d="M0 6h9" stroke="#1a2a2a" strokeWidth="2" /><path d="M8 12h9" stroke="#0a8080" strokeWidth="2" /></Svg>
          </ExpandStrip>
          <NavTree>
            <Top label="常用构件类型" open />
            <Kids items={common} />
            <Top label="轴线" />
            <Top label="柱" />
            <Top label="墙" />
            <Top label="门窗洞" />
            <Top label="梁" open />
            <Kids items={beams} />
            <Top label="板" />
            <Top label="基础" open />
            <Kids items={found} />
            <Top label="其它" />
            <Top label="自定义" open />
            <ScrollTrack>
              <ScrollThumb $top={20} $h={394} />
              <ChevUp />
              <ChevDown />
            </ScrollTrack>
          </NavTree>
          <NavBtn $mt={2} $h={21}>单构件输入</NavBtn>
          <NavBtn $mt={1} $h={21}>报表预览</NavBtn>
        </Nav>

        <Main>
          <CmdBar>
            <Tool><IAddNew />新建<Caret /></Tool>
            <Tool $ml={7}><ICross />删除</Tool>
            <Tool $ml={7}><ICopy />复制</Tool>
            <Tool $ml={7}><IRename />重命名</Tool>
            <VSep $ml={6} />
            <Tool $ml={2}>楼层</Tool>
            <FloorCombo>第7层<Caret /></FloorCombo>
            <VSep $ml={2} />
            <Tool $ml={6}><ISort />排序<Caret /></Tool>
            <Tool $ml={7}><IFilter />过滤<Caret /></Tool>
            <VSep $ml={5} />
            <Tool $ml={3}><ICopyFloor />从其他楼层复制构件</Tool>
            <Tool $ml={8}><ICopyFloor />复制构件到其他楼层</Tool>
            <VSep $ml={6} />
            <Tool $ml={8}>查找<Caret /></Tool>
            <VSep $ml={7} />
            <Tool $ml={7}><IUp />上移</Tool>
            <Tool $ml={12} $off><IDown />下移</Tool>
          </CmdBar>
          <Split>
            <TreeCol>
              <SearchRow>
                <SearchBox>搜索构件...</SearchBox>
                <SearchBtn><Svg w={16} h={16}><circle cx="9.500" cy="6.500" r="4.500" fill="#eaf4fc" stroke="#2a8ad0" strokeWidth="1.6" /><path d="M6 10l-4 4" stroke="#2a8ad0" strokeWidth="2.400" /></Svg></SearchBtn>
              </SearchRow>
              <KzTree>
                <KzRoot>
                  <ChevCell><ChevDown /></ChevCell>
                  <DotStub $w={6} />
                  <IColumn dk />
                  <ChildLabel>框柱</ChildLabel>
                </KzRoot>
                <KzList>
                  {kz.map(k => (
                    <RowT key={k}>
                      <DotStub $w={7} />
                      <KzLabel $sel={k === 'KZ-21'}><IGear /><Mono>{k}</Mono></KzLabel>
                    </RowT>
                  ))}
                </KzList>
              </KzTree>
            </TreeCol>
            <EditorCol>
              <TabStrip><Tab>属性编辑</Tab></TabStrip>
              <EditorBody>
                <Grid>
                  <GRow $h={22}>
                    <HeadCell />
                    <HeadCell>属性名称</HeadCell>
                    <HeadCell $hot>属性值</HeadCell>
                    <HeadCell>附加</HeadCell>
                  </GRow>
                  {props.map(p => (
                    <GRow key={p.n}>
                      <IdxCell $sel={p.sel}>{p.n}</IdxCell>
                      <NameCell $sel={p.sel} $c={p.c}>{fmt(p.name)}</NameCell>
                      <ValueCell $sel={p.sel} $off={p.off}>{p.val}</ValueCell>
                      <AddCell>{p.check && <Check />}</AddCell>
                    </GRow>
                  ))}
                  {groups.map(([n, g]) => (
                    <GRow key={n}>
                      <IdxCell>{n}</IdxCell>
                      <GroupCell><PlusBox />{g}</GroupCell>
                      <ValueCell />
                      <AddCell />
                    </GRow>
                  ))}
                </Grid>
              </EditorBody>
            </EditorCol>
          </Split>
        </Main>
      </Body>

      <RedMark />

      <Dialog>
        <DlgTitle>截面编辑</DlgTitle>
        <DlgInner>
          <DlgBar $h={28}>
            <span>布角筋</span><span>布边筋</span><span>特殊布筋</span><span>对齐钢筋</span><span>画箍筋</span>
            <DlgSep $h={15} />
            <span>修改纵筋</span><span>修改箍筋</span><span>编辑弯钩</span><span>端头伸缩</span>
            <DlgOff>删除</DlgOff>
          </DlgBar>
          <DlgBar $h={26}>
            <DlgLabel>钢筋信息</DlgLabel>
            <RebarCombo>C12@300<Caret $c="#666" /></RebarCombo>
          </DlgBar>
          <CanvasBox><Section /></CanvasBox>
        </DlgInner>
        <DlgStatus>
          <DlgCell><Mono>(X: 601 Y: 558)</Mono></DlgCell>
          <DlgCell $grow>
            <Grip><Svg w={12} h={12}><path d="M9 2h2v2H9zM6 5h2v2H6zM9 5h2v2H9zM3 8h2v2H3zM6 8h2v2H6zM9 8h2v2H9z" fill="#bbb" /></Svg></Grip>
          </DlgCell>
        </DlgStatus>
      </Dialog>
      <SideScroll>
        <ScrollThumb $top={14} $h={313} />
        <ChevUp />
        <ChevDown />
      </SideScroll>

      <Status>
        <StatusCell $w={149} />
        <StatusCell $w={77}>{fmt('层高:2.8m')}</StatusCell>
        <StatusCell $w={98}>{fmt('底标高:20.35m')}</StatusCell>
        <StatusCell $w={48}>{fmt('0')}</StatusCell>
        <StatusCell>选择圆柱的箍筋形式是螺旋箍筋还是圆形箍筋</StatusCell>
        <StatusCell $w={69}><FpsText>1064.4 FPS</FpsText></StatusCell>
      </Status>

      <Taskbar>
        <StartBtn>
          <Svg w={17} h={17}><path d="M0 2.500l7-1v6.500H0zM8 1.300l9-1.300v8H8zM0 9h7v6.500l-7-1zM8 9h9v8l-9-1.300z" fill="#fff" /></Svg>
        </StartBtn>
        <SearchTask>
          <Svg w={22} h={22}><circle cx="11" cy="11" r="8.500" fill="none" stroke="#e4e4e4" strokeWidth="2.500" /></Svg>
          <span>在这里输入你要搜索的内容</span>
          <TrayIcon $l={318}><Svg w={12} h={18}><rect x="3" y="0.500" width="6" height="11" rx="3" fill="none" stroke="#8a8a8a" /><path d="M1 8c0 6 10 6 10 0M6 13v4M3 17h6" fill="none" stroke="#8a8a8a" /></Svg></TrayIcon>
        </SearchTask>
        <TaskIcon $l={396}><Svg w={22} h={18}><rect x="5" y="1" width="12" height="16" fill="none" stroke="#fff" strokeWidth="1.400" /><path d="M2 3H1v12h1M20 3h1v12h-1" fill="none" stroke="#fff" /></Svg></TaskIcon>
        <TaskIcon $l={446}><Svg w={22} h={22}><g fill="#e8e8e8">{[0, 90, 180, 270].map(r => <path key={r} transform={`rotate(${r} 11 11)`} d="M11 10C8 9 3 10 2 6 1 2 6 0 9 1c3 1 4 5 2 9z" />)}</g></Svg></TaskIcon>
        <TaskIcon $l={498}><Svg w={22} h={24}><ellipse cx="11" cy="13" rx="9" ry="9" fill="none" stroke="#e8e8e8" strokeWidth="3" /><path d="M3 13h17" stroke="#e8e8e8" strokeWidth="2.500" /><path d="M18 16h6v5h-6z" fill="#05111a" /></Svg></TaskIcon>
        <TaskIcon $l={550}><Svg w={28} h={24}><circle cx="11" cy="14" r="8" fill="none" stroke="#c8c8c8" strokeWidth="1.500" /><circle cx="11" cy="14" r="4" fill="none" stroke="#c8c8c8" strokeWidth="1.500" /><path d="M18 2c3 0 3 3 3 5s1 3 2 4h-10c1-1 2-2 2-4s0-5 3-5z" fill="#f0a818" /><rect x="16.500" y="11.500" width="3" height="2" fill="#f0a818" /></Svg></TaskIcon>
        <TaskSep $l={600} />
        <TaskIcon $l={616}><EdgeGlyph>e</EdgeGlyph></TaskIcon>
        <TaskIcon $l={656}><Svg w={24} h={24}><ellipse cx="12" cy="13" rx="9" ry="9" fill="none" stroke="#1a9ee8" strokeWidth="3.500" /><path d="M3 13h18" stroke="#1a9ee8" strokeWidth="3" /><path d="M2 22c5-1 14-10 20-19" stroke="#f0c820" strokeWidth="1.800" fill="none" /></Svg></TaskIcon>
        <TaskIcon $l={696}><Svg w={22} h={20}><path d="M0 1h8l2 2h12v17H0z" fill="#f7d673" /><path d="M0 8h22v12H0z" fill="#fbe396" /><rect x="7" y="13" width="8" height="7" fill="#3aa8d8" /></Svg></TaskIcon>
        <TaskIcon $l={738}><Svg w={24} h={26}><circle cx="12" cy="14" r="10" fill="#8ccc4c" stroke="#4a9a2a" /><ellipse cx="12" cy="14" rx="6" ry="7" fill="#fff" /><path d="M8 14h8" stroke="#4a9a2a" strokeWidth="2" /><path d="M14 1c3 0 5 1 6 3" stroke="#4a9a2a" strokeWidth="2" fill="none" /></Svg></TaskIcon>
        <TaskIcon $l={776} $active $run><Svg w={24} h={24}><rect width="24" height="24" rx="4" fill="#0a8cee" /><path d="M12 3v18M4 10c0 5 3 6 8 6s8-1 8-6" stroke="#fff" strokeWidth="2.400" fill="none" /></Svg></TaskIcon>
        <TaskIcon $l={816} $run><Svg w={24} h={24}><rect width="24" height="24" rx="2" fill="#f0a020" /><path d="M4 4h14v16H4z" fill="#fbe8c0" /><path d="M6 9h9M6 12h9M6 15h6" stroke="#a87020" /><path d="M22 2L12 17" stroke="#b04020" strokeWidth="2" /></Svg></TaskIcon>
        <TaskIcon $l={855} $run><Svg w={24} h={24}><path d="M22 3c-6-4-16-3-19 5-2 7 1 14 8 15 5 1 10-2 10-7l2-5h-11v3h6c0 3-3 5-6 4-4-1-5-5-4-9 2-4 8-5 13-2z" fill="#1a8ae8" /></Svg></TaskIcon>
        <TaskSep $l={910} />
        <TrayText $l={918} $w={36} $c="#c8c8c8">链接</TrayText>
        <TrayText $l={962} $w={60}><span>21%</span><span>CPU使用</span></TrayText>
        <TrayIcon $l={1034}><Svg w={14} h={16}><path d="M1 12l6-6 6 6" fill="none" stroke="#fff" strokeWidth="1.300" /></Svg></TrayIcon>
        <TrayIcon $l={1059}><Svg w={14} h={18}><path d="M7 1c3 0 4 3 4 6 0 3 1 5 2 6H1c1-1 2-3 2-6 0-3 1-6 4-6z" fill="#fff" /><path d="M5 15h4" stroke="#fff" strokeWidth="1.600" /></Svg></TrayIcon>
        <TrayIcon $l={1083}><Svg w={16} h={18}><rect x="5" y="6" width="11" height="10" rx="1" fill="none" stroke="#fff" /><rect x="7" y="8" width="5" height="6" fill="#fff" /><path d="M2 2v4M5 2v4M1 6h5v2H1z" stroke="#fff" fill="#fff" /></Svg></TrayIcon>
        <TrayIcon $l={1108}><Svg w={15} h={17}><path d="M2 15a12 12 0 0 1 11-11M5 15a8 8 0 0 1 8-8M8 15a5 5 0 0 1 5-4" fill="none" stroke="#cfcfcf" strokeWidth="1.300" strokeDasharray="2 1" /><circle cx="12" cy="15" r="1.500" fill="#fff" /></Svg></TrayIcon>
        <TrayIcon $l={1130}><Svg w={16} h={17}><path d="M1 6h3l4-4v13l-4-4H1z" fill="none" stroke="#fff" /><path d="M10 5c2 2 2 5 0 7M13 3c3 3 3 8 0 11" fill="none" stroke="#aaa" /></Svg></TrayIcon>
        <TrayIcon $l={1155}><Svg w={22} h={17}><rect x="0.500" y="1.500" width="21" height="14" fill="none" stroke="#fff" /><path d="M3 5h16M3 8h16" stroke="#fff" strokeDasharray="1.500 1" /><path d="M6 12h10" stroke="#fff" /></Svg></TrayIcon>
        <TrayText $l={1184} $w={20} $c="#fff" $fs={14}>中</TrayText>
        <TrayIcon $l={1213}><Svg w={17} h={19}><rect x="1" y="1" width="15" height="17" rx="2" fill="#e8421a" transform="rotate(-7 8 9)" /><path d="M12 5H6v4h5v4H5" fill="none" stroke="#fff" strokeWidth="2.200" /></Svg></TrayIcon>
        <TrayText $l={1245} $w={62} $lh={19} $fs={12.5}><span>19:41</span><span>2018/7/31</span></TrayText>
        <TrayIcon $l={1325}><Svg w={17} h={17}><path d="M1 1h15v12h-5l-2.500 3L6 13H1z" fill="none" stroke="#fff" strokeWidth="1.200" /></Svg></TrayIcon>
      </Taskbar>
    </Page>
  );
}
